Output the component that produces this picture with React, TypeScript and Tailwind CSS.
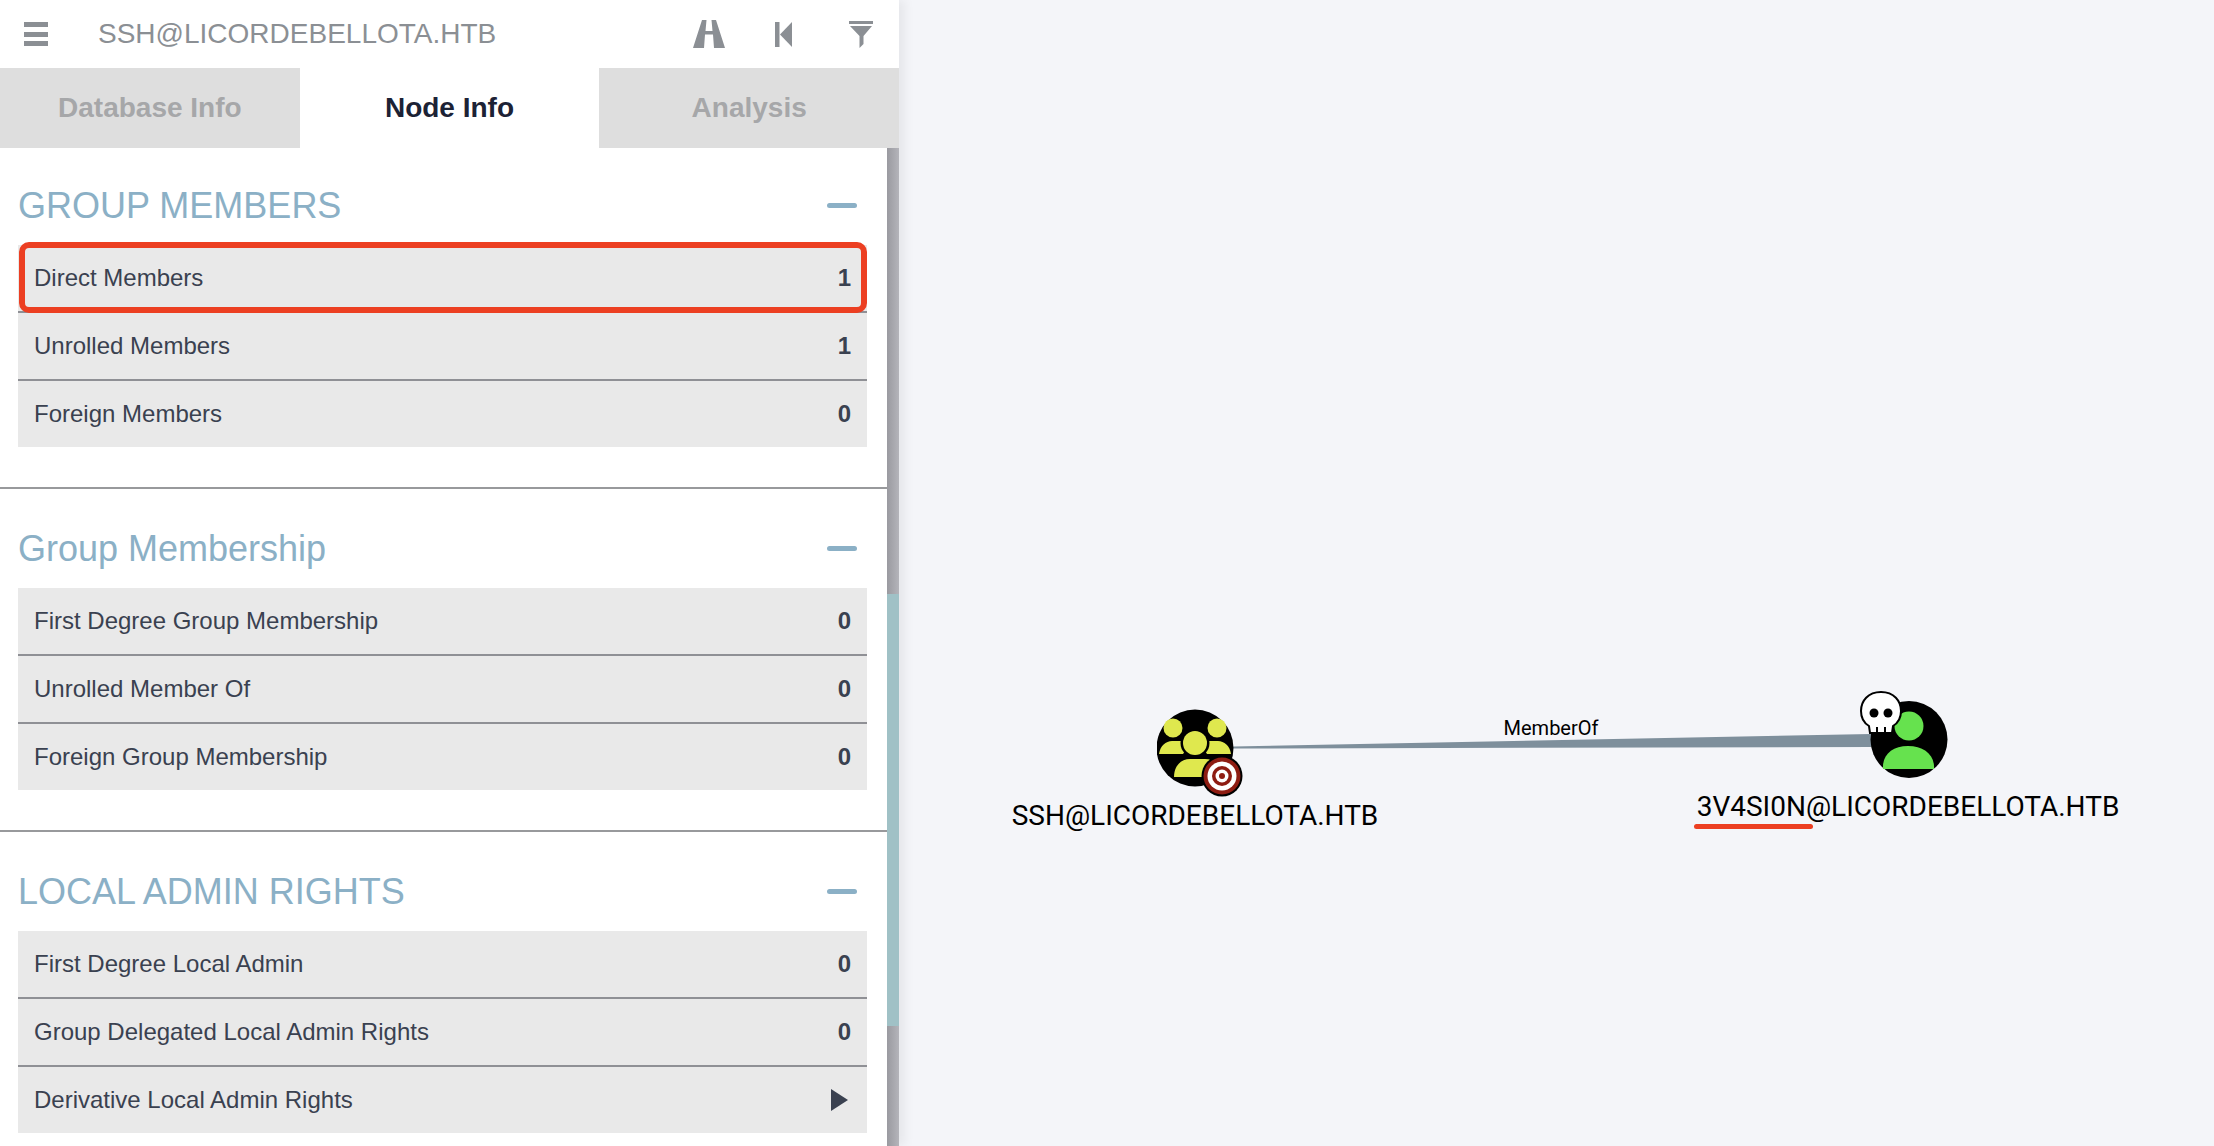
interface RowProps {
  label: string
  value?: number
  highlighted?: boolean
}

interface SectionProps {
  title: string
  rows: RowProps[]
  first?: boolean
}

const sections: SectionProps[] = [
  {
    title: 'GROUP MEMBERS',
    first: true,
    rows: [
      { label: 'Direct Members', value: 1, highlighted: true },
      { label: 'Unrolled Members', value: 1 },
      { label: 'Foreign Members', value: 0 },
    ],
  },
  {
    title: 'Group Membership',
    rows: [
      { label: 'First Degree Group Membership', value: 0 },
      { label: 'Unrolled Member Of', value: 0 },
      { label: 'Foreign Group Membership', value: 0 },
    ],
  },
  {
    title: 'LOCAL ADMIN RIGHTS',
    rows: [
      { label: 'First Degree Local Admin', value: 0 },
      { label: 'Group Delegated Local Admin Rights', value: 0 },
      { label: 'Derivative Local Admin Rights' },
    ],
  },
]

function Row({ label, value, highlighted }: RowProps) {
  return (
    <div className="relative flex h-[68px] items-center justify-between border-b-2 border-[#8f9095] bg-[#e9e9e9] pr-4 pl-4 text-[24px] text-[#3a4150] last:h-[66px] last:border-b-0">
      <span>{label}</span>
      {value === undefined ? (
        <svg width="17" height="22" viewBox="0 0 17 22" className="mr-[3px]">
          <path d="M0 0 L17 11 L0 22 Z" fill="#3a4150" />
        </svg>
      ) : (
        <span className="font-bold">{value}</span>
      )}
      {highlighted && (
        <div className="absolute -top-[3px] right-0 -bottom-[2px] left-[1px] rounded-[10px] border-[6px] border-[#ec3f22]" />
      )}
    </div>
  )
}

function Section({ title, rows, first }: SectionProps) {
  return (
    <section
      className={`pr-5 pb-10 pl-[18px] ${first ? '-mt-[2px]' : 'border-t-2 border-[#98999c]'}`}
    >
      <div className="flex h-[99px] items-center justify-between pt-[20px] pr-[10px]">
        <h2 className="text-[36px] font-normal text-[#8bb0c6]">{title}</h2>
        <div className="h-[5px] w-[30px] rounded-full bg-[#8bb0c6]" />
      </div>
      <div>
        {rows.map((row) => (
          <Row key={row.label} {...row} />
        ))}
      </div>
    </section>
  )
}

function GroupNode() {
  return (
    <svg width="112" height="110" viewBox="0 0 112 110" className="block">
      <circle cx="38" cy="39" r="38.5" fill="#000" />
      <g fill="#dfe84e">
        <circle cx="16" cy="19" r="9.5" />
        <circle cx="60" cy="19" r="9.5" />
        <path d="M2 45 C3 37 9 32 15 32 L26 32 C29 38 29 41 26 45 Z" />
        <path d="M74 45 C73 37 67 32 61 32 L50 32 C47 38 47 41 50 45 Z" />
      </g>
      <circle cx="38" cy="34" r="14.5" fill="#000" />
      <circle cx="38" cy="34" r="12" fill="#dfe84e" />
      <path d="M17 68 C17 57 24 50 33 50 L48 50 C58 50 62 58 62 68 Z" fill="#dfe84e" />
      <circle cx="65" cy="67" r="20.5" fill="#000" />
      <circle cx="65" cy="67" r="18.5" fill="#8e1c12" />
      <circle cx="65" cy="67" r="14.5" fill="#fff" />
      <circle cx="65" cy="67" r="10" fill="#8e1c12" />
      <circle cx="65" cy="67" r="6.5" fill="#fff" />
      <circle cx="65" cy="67" r="3" fill="#8e1c12" />
    </svg>
  )
}

function UserNode() {
  return (
    <svg width="110" height="100" viewBox="0 0 110 100" className="block">
      <circle cx="68" cy="48.5" r="38.5" fill="#000" />
      <circle cx="68" cy="35" r="14.5" fill="#66e24e" />
      <path d="M42 78 C41 64 51 55 67 55 C83 55 94 64 93 78 Z" fill="#66e24e" />
      <path
        d="M40 1 C27 1 20 10 20 20 C20 27 23 32 28 35 L29 42 L51 42 L52 35 C57 32 60 27 60 20 C60 10 53 1 40 1 Z"
        fill="#fff"
        stroke="#000"
        strokeWidth="2"
      />
      <path d="M36 36 L36 42 M44 36 L44 42" stroke="#000" strokeWidth="2" />
      <circle cx="33" cy="22" r="4.5" fill="#000" />
      <circle cx="47" cy="22" r="4.5" fill="#000" />
    </svg>
  )
}

export default function App() {
  return (
    <div className="flex h-[1146px] w-[2214px] overflow-hidden bg-[#f4f5f9] font-['Liberation_Sans',sans-serif]">
      <aside className="z-10 flex h-full w-[899px] shrink-0 flex-col bg-white shadow-[6px_0_10px_rgba(0,0,0,0.06)]">
        <header className="flex h-[68px] shrink-0 items-center pr-[26px] pl-6 text-[#8b8f94]">
          <div className="flex h-6 w-6 flex-col justify-between">
            <div className="h-[5px] bg-[#8b8f94]" />
            <div className="h-[5px] bg-[#8b8f94]" />
            <div className="h-[5px] bg-[#8b8f94]" />
          </div>
          <span className="ml-[50px] flex-1 text-[28px]">SSH@LICORDEBELLOTA.HTB</span>
          {/* road */}
          <svg width="32" height="28" viewBox="0 0 32 28" fill="currentColor" className="mr-[50px]">
            <path
              fillRule="evenodd"
              d="M0 28 L9 0 L23 0 L32 28 Z M13.5 0 L12.5 11 L19.5 11 L18.5 0 Z M12 14.5 L11 28 L21 28 L20 14.5 Z"
            />
          </svg>
          {/* step back */}
          <svg width="17" height="25" viewBox="0 0 17 25" fill="currentColor" className="mr-[57px]">
            <rect x="0" y="0" width="4.5" height="25" />
            <path d="M5 12.5 L17 0 L17 25 Z" />
          </svg>
          <svg width="24" height="27" viewBox="0 0 24 27" fill="currentColor">
            <rect x="0" y="0" width="24" height="3" />
            <path d="M1 5 L23 5 L14.5 15 L14.5 23 L10.5 27 L10.5 15 Z" />
          </svg>
        </header>

        <nav className="grid h-20 shrink-0 grid-cols-3 text-[28px] font-bold">
          <div className="flex items-center justify-center bg-[#dedede] text-[#a6a7a9]">Database Info</div>
          <div className="flex items-center justify-center bg-white text-[#1c2235]">Node Info</div>
          <div className="flex items-center justify-center bg-[#dedede] text-[#a6a7a9]">Analysis</div>
        </nav>

        <div className="flex min-h-0 flex-1">
          <div className="min-w-0 flex-1 overflow-hidden">
            {sections.map((section) => (
              <Section key={section.title} {...section} />
            ))}
          </div>
          <div className="flex w-3 shrink-0 flex-col bg-gradient-to-r from-[#9a9aa0] to-[#b4b4ba]">
            <div className="mt-[446px] h-[432px] bg-[#a0c1c6]" />
          </div>
        </div>
      </aside>

      <main className="relative flex-1 font-['Roboto',sans-serif]">
        <svg className="absolute top-0 left-0" width="1315" height="1146">
          <polygon points="334,746.5 972,734 972,747 334,748.5" fill="#7e8f9c" />
        </svg>
        <span className="absolute top-[728px] left-[652px] -translate-x-1/2 -translate-y-1/2 text-[20px] whitespace-nowrap text-black">
          MemberOf
        </span>
        <div className="absolute top-[709px] left-[258px]">
          <GroupNode />
        </div>
        <div className="absolute top-[691px] left-[942px]">
          <UserNode />
        </div>
        <span className="absolute top-[798px] left-[296px] -translate-x-1/2 text-[28px] leading-9 whitespace-nowrap text-black">
          SSH@LICORDEBELLOTA.HTB
        </span>
        <span className="absolute top-[789px] left-[1009px] -translate-x-1/2 text-[28px] leading-9 whitespace-nowrap text-black">
          3V4SI0N@LICORDEBELLOTA.HTB
        </span>
        <div className="absolute top-[824px] left-[795px] h-[5px] w-[119px] rounded-full bg-[#ec3f22]" />
      </main>
    </div>
  )
}
